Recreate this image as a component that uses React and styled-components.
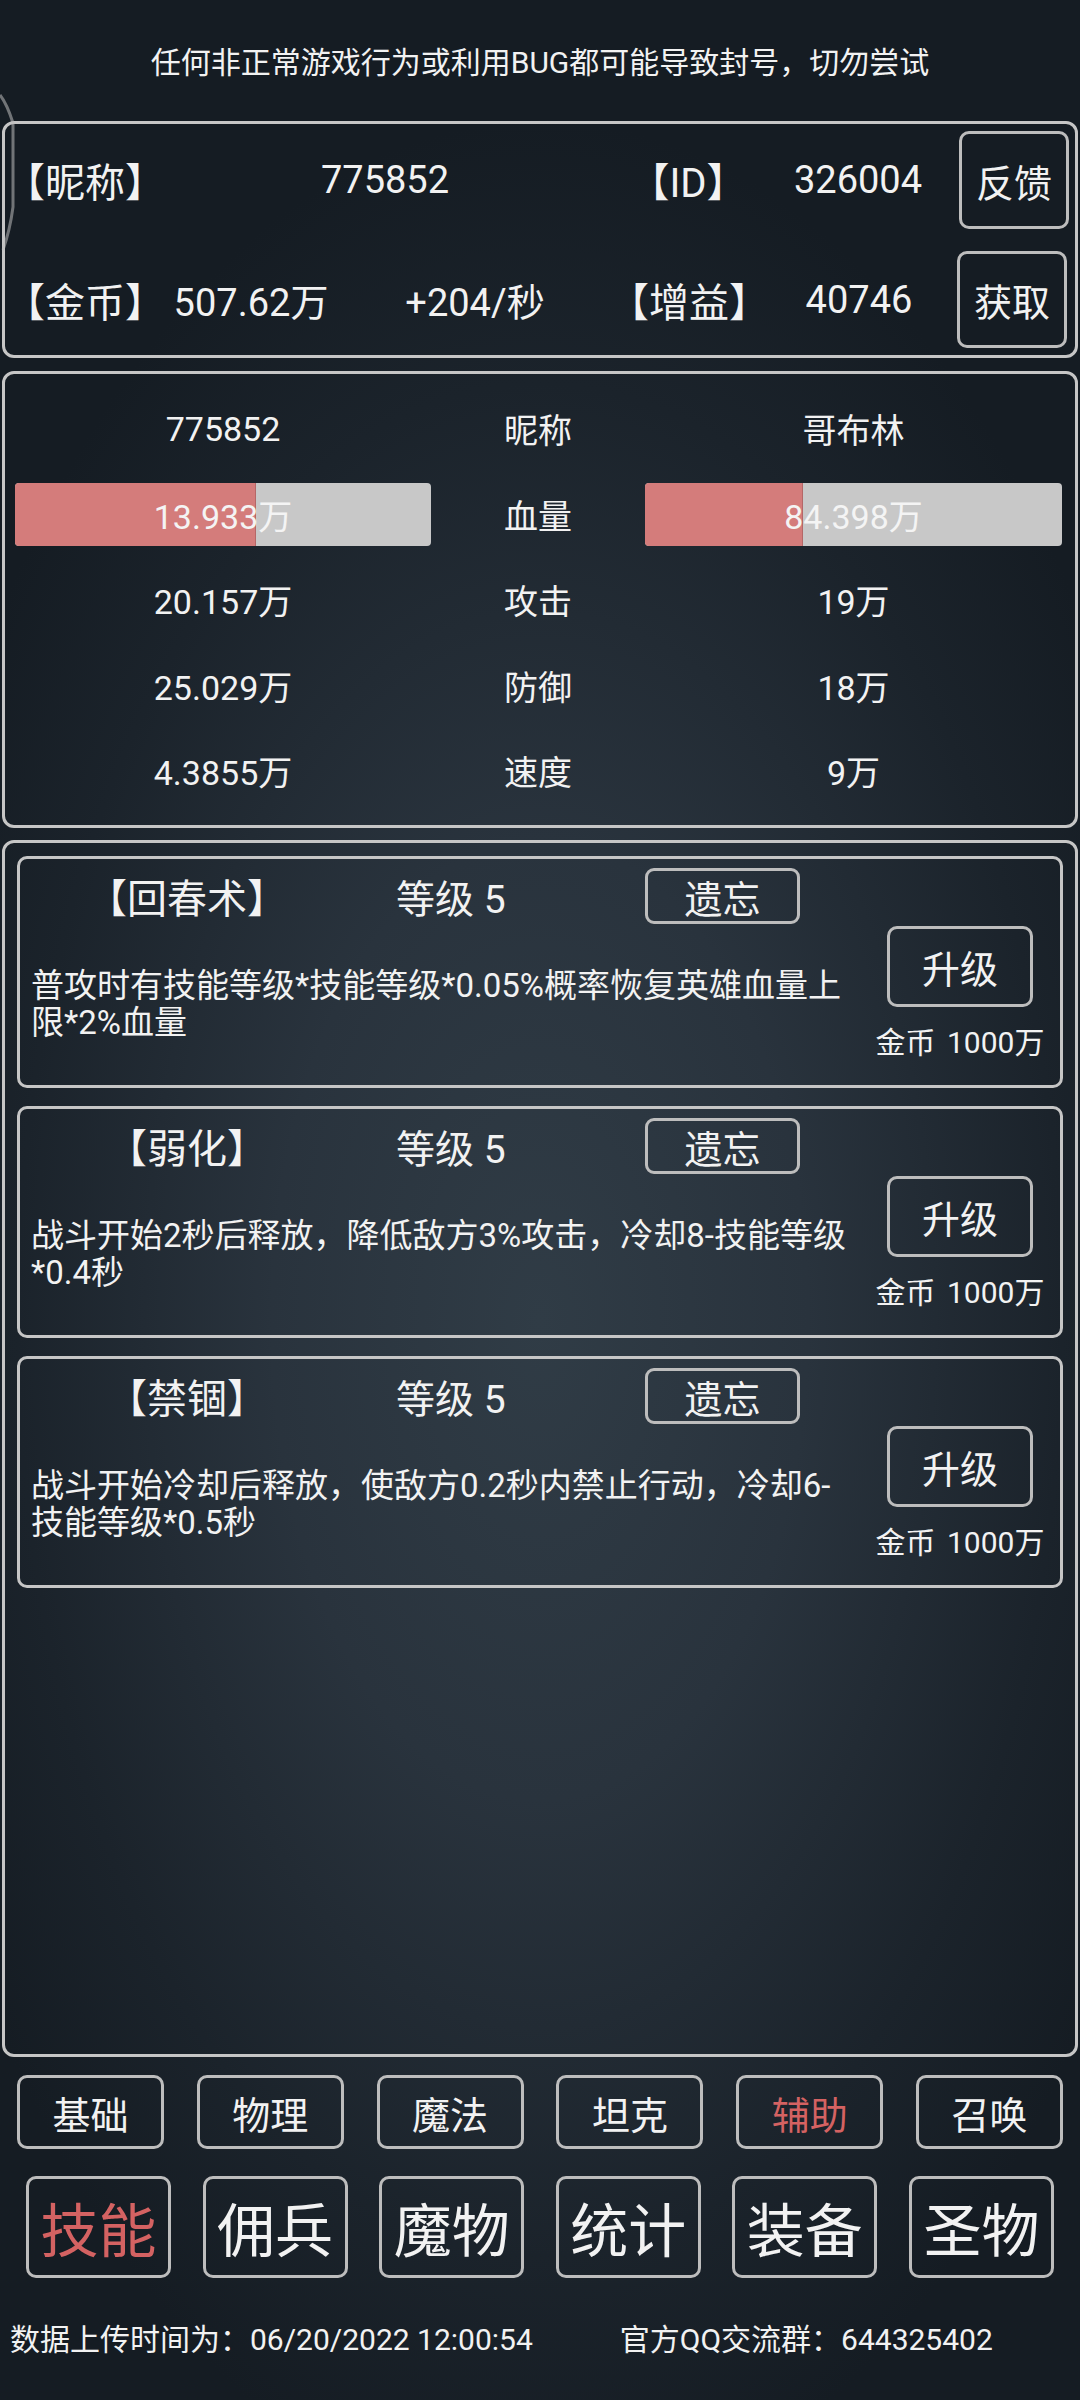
import React from 'react';
import styled, { createGlobalStyle } from 'styled-components';

const GlobalStyle = createGlobalStyle`
  html, body {
    margin: 0;
    padding: 0;
    background: #151c23;
  }
  * {
    box-sizing: border-box;
  }
`;

const Page = styled.div`
  position: relative;
  width: 1080px;
  height: 2400px;
  overflow: hidden;
  color: #f2f2f2;
  font-family: Roboto, "Noto Sans CJK SC", sans-serif;
  background: radial-gradient(ellipse 62% 50% at 50% 55%, #303c46 0%, #29333d 40%, #1b232b 78%, #151c23 100%);
`;

const EdgeArc = styled.svg`
  position: absolute;
  left: 0;
  top: 90px;
  pointer-events: none;
`;

const Notice = styled.div`
  height: 121px;
  padding-bottom: 2px;
  display: flex;
  align-items: center;
  justify-content: center;
  font-size: 30px;
`;

const Panel = styled.div`
  margin: 0 2px;
  border: 3px solid #c6c6c6;
  border-radius: 12px;
  margin-bottom: ${(p) => p.$gap || 0}px;
`;

const InfoPanel = styled(Panel)`
  height: 237px;
  padding: 7px 8px 7px 0;
  display: flex;
  flex-direction: column;
  gap: 22px;
`;

const InfoRow = styled.div`
  display: grid;
  grid-template-columns: ${(p) => p.$cols} 1fr;
  align-items: center;
  height: 98px;
  font-size: 38px;
`;

const InfoCell = styled.div`
  text-align: center;
  white-space: nowrap;
`;

const Bracketed = styled.span`
  font-size: 40px;
`;

const BoxButton = styled.div`
  display: flex;
  align-items: center;
  justify-content: center;
  width: ${(p) => p.$w}px;
  height: ${(p) => p.$h}px;
  border: 3px solid #bdbdbd;
  border-radius: ${(p) => p.$r || 10}px;
  font-size: ${(p) => p.$fs || 38}px;
  color: ${(p) => (p.$active ? '#d46262' : '#f2f2f2')};
  justify-self: end;
  flex-shrink: 0;
`;

const StatsPanel = styled(Panel)`
  height: 457px;
  padding: 12px 0 12px 10px;
`;

const StatRow = styled.div`
  display: grid;
  grid-template-columns: 416px 214px 417px;
  align-items: center;
  height: 85.5px;
  font-size: 34px;
`;

const StatCell = styled.div`
  text-align: center;
`;

const Bar = styled.div`
  position: relative;
  height: 63px;
  border-radius: 4px;
  background: #c8c8c8;
  overflow: hidden;
  display: flex;
  align-items: center;
  justify-content: center;
`;

const BarFill = styled.div`
  position: absolute;
  left: 0;
  top: 0;
  bottom: 0;
  background: #d47c7b;
  border-right: 1px solid #b56767;
`;

const BarText = styled.span`
  position: relative;
  color: #f4f4f4;
  font-size: 34px;
`;

const SkillPanel = styled(Panel)`
  height: 1217px;
  padding: 13px 12px 0 12px;
  display: flex;
  flex-direction: column;
  gap: 18px;
`;

const SkillCard = styled.div`
  height: 232px;
  border: 3px solid #c6c6c6;
  border-radius: 10px;
  display: flex;
`;

const SkillMain = styled.div`
  flex: 1;
  display: flex;
  flex-direction: column;
`;

const SkillHead = styled.div`
  display: flex;
  align-items: center;
  margin-top: 9px;
  height: 56px;
  font-size: 39px;
`;

const SkillName = styled.div`
  width: 334px;
  text-align: center;
  white-space: nowrap;
  font-size: 40px;
`;

const SkillLevel = styled.div`
  width: 291px;
  padding-left: 42px;
  white-space: nowrap;
`;

const SkillDesc = styled.div`
  margin-top: 43px;
  padding-left: 11px;
  font-size: 33px;
  line-height: 37px;
  white-space: nowrap;
`;

const SkillSide = styled.div`
  flex: 0 0 200px;
  display: flex;
  flex-direction: column;
  align-items: center;
  padding-top: 67px;
`;

const Cost = styled.div`
  margin-top: 18px;
  font-size: 30px;
  line-height: 36px;
  white-space: nowrap;
  word-spacing: 4px;
`;

const TabRow = styled.div`
  display: flex;
  justify-content: space-between;
  padding: 0 ${(p) => p.$pad}px;
  margin-top: ${(p) => p.$top}px;
`;

const Footer = styled.div`
  display: flex;
  gap: 87px;
  padding-left: 10px;
  margin-top: 44px;
  font-size: 30px;
  line-height: 36px;
  white-space: nowrap;
`;

const skills = [
  {
    name: '【回春术】',
    level: 5,
    lines: ['普攻时有技能等级*技能等级*0.05%概率恢复英雄血量上', '限*2%血量'],
  },
  {
    name: '【弱化】',
    level: 5,
    lines: ['战斗开始2秒后释放，降低敌方3%攻击，冷却8-技能等级', '*0.4秒'],
  },
  {
    name: '【禁锢】',
    level: 5,
    lines: ['战斗开始冷却后释放，使敌方0.2秒内禁止行动，冷却6-', '技能等级*0.5秒'],
  },
];

const stats = [
  { left: '20.157万', label: '攻击', right: '19万' },
  { left: '25.029万', label: '防御', right: '18万' },
  { left: '4.3855万', label: '速度', right: '9万' },
];

const subTabs = ['基础', '物理', '魔法', '坦克', '辅助', '召唤'];
const mainTabs = ['技能', '佣兵', '魔物', '统计', '装备', '圣物'];

function HpBar({ value, ratio }) {
  return (
    <Bar>
      <BarFill style={{ width: `${ratio * 100}%` }} />
      <BarText>{value}</BarText>
    </Bar>
  );
}

function App() {
  return (
    <Page>
      <GlobalStyle />
      <EdgeArc width="20" height="170" viewBox="0 0 20 170">
        <path d="M0 5 Q7 14 13 33 L13 117 Q10 140 3 160" fill="none" stroke="rgba(190,190,190,0.55)" strokeWidth="3" />
      </EdgeArc>

      <Notice>任何非正常游戏行为或利用BUG都可能导致封号，切勿尝试</Notice>

      <InfoPanel $gap={13}>
        <InfoRow $cols="146px 468px 138px 202px">
          <InfoCell><Bracketed>【昵称】</Bracketed></InfoCell>
          <InfoCell>775852</InfoCell>
          <InfoCell><Bracketed>【ID】</Bracketed></InfoCell>
          <InfoCell>326004</InfoCell>
          <BoxButton $w={110} $h={98}>反馈</BoxButton>
        </InfoRow>
        <InfoRow $cols="146px 200px 248px 180px 160px">
          <InfoCell><Bracketed>【金币】</Bracketed></InfoCell>
          <InfoCell>507.62万</InfoCell>
          <InfoCell>+204/秒</InfoCell>
          <InfoCell><Bracketed>【增益】</Bracketed></InfoCell>
          <InfoCell>40746</InfoCell>
          <BoxButton $w={110} $h={97}>获取</BoxButton>
        </InfoRow>
      </InfoPanel>

      <StatsPanel $gap={12}>
        <StatRow>
          <StatCell>775852</StatCell>
          <StatCell>昵称</StatCell>
          <StatCell>哥布林</StatCell>
        </StatRow>
        <StatRow>
          <HpBar value="13.933万" ratio={0.58} />
          <StatCell>血量</StatCell>
          <HpBar value="84.398万" ratio={0.379} />
        </StatRow>
        {stats.map((s) => (
          <StatRow key={s.label}>
            <StatCell>{s.left}</StatCell>
            <StatCell>{s.label}</StatCell>
            <StatCell>{s.right}</StatCell>
          </StatRow>
        ))}
      </StatsPanel>

      <SkillPanel>
        {skills.map((sk) => (
          <SkillCard key={sk.name}>
            <SkillMain>
              <SkillHead>
                <SkillName>{sk.name}</SkillName>
                <SkillLevel>等级 {sk.level}</SkillLevel>
                <BoxButton $w={155} $h={56} $r={9}>遗忘</BoxButton>
              </SkillHead>
              <SkillDesc>
                {sk.lines.map((l) => (
                  <div key={l}>{l}</div>
                ))}
              </SkillDesc>
            </SkillMain>
            <SkillSide>
              <BoxButton $w={146} $h={81}>升级</BoxButton>
              <Cost>金币 1000万</Cost>
            </SkillSide>
          </SkillCard>
        ))}
      </SkillPanel>

      <TabRow $pad={17} $top={18}>
        {subTabs.map((t) => (
          <BoxButton key={t} $w={147} $h={74} $active={t === '辅助'}>
            {t}
          </BoxButton>
        ))}
      </TabRow>

      <TabRow $pad={26} $top={27}>
        {mainTabs.map((t) => (
          <BoxButton key={t} $w={145} $h={102} $fs={58} $active={t === '技能'}>
            {t}
          </BoxButton>
        ))}
      </TabRow>

      <Footer>
        <span>数据上传时间为：06/20/2022 12:00:54</span>
        <span>官方QQ交流群：644325402</span>
      </Footer>
    </Page>
  );
}

export default App;
